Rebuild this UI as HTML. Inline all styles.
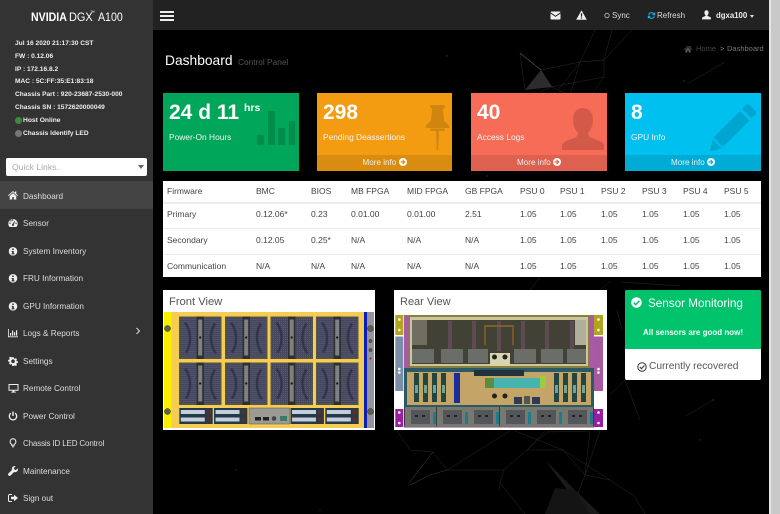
<!DOCTYPE html>
<html lang="en"><head><meta charset="utf-8"><title>Dashboard</title>
<style>
html,body{margin:0;padding:0;width:780px;height:514px;overflow:hidden;background:#000}
body{position:relative;font-family:"Liberation Sans",sans-serif}
.a{position:absolute;white-space:nowrap;line-height:1}
.abs{position:absolute}
#side{position:absolute;left:0;top:0;width:153px;height:514px;background:#333}
.info{position:absolute;left:15px;font-size:6.6px;font-weight:bold;color:#eee;white-space:nowrap;line-height:8px}
.nav{position:absolute;left:23px;font-size:8.2px;color:#ddd;white-space:nowrap;line-height:11px}
.ic{position:absolute;left:8px;width:10px;height:10px;fill:#eee}
.card{position:absolute;top:93px;height:78px;color:#fff}
.card .n{position:absolute;left:6px;top:9px;font-size:21px;font-weight:bold;line-height:22px;white-space:nowrap}
.card .l{position:absolute;left:6px;top:39px;font-size:8.4px;line-height:11px;white-space:nowrap;color:#f4f4f4}
.card .f{position:absolute;left:0;right:0;bottom:0;height:16px;background:rgba(0,0,0,.1);text-align:center;font-size:8.1px;line-height:16px;color:#eee}
.card svg.big{position:absolute}
.t{position:absolute;font-size:8.5px;line-height:10px;color:#444;white-space:nowrap}
.hr{position:absolute;left:163px;width:598px;height:1px;background:#ececec}
</style></head><body>

<svg class="abs" style="left:153px;top:30px" width="616" height="484" viewBox="153 30 616 484">
 <g fill="none" stroke="#2a2a2a" stroke-width=".5">
  <path d="M541 70 552 87 558 90 580 62 604 60 632 30M541 70 580 62 604 60M552 87 604 77 604 60M580 62 570 95 588 100 604 77M520 53 525 90M595 30 580 62M552 87 540 92M558 90 570 95M612 30 604 60"/>
  <path d="M687 84 725 62"/>
  <path d="M397 431 410 450 433 452 447 470 510 431M447 470 504 470 500 483 499 490M504 470 527 450 545 431M527 450 547 432 590 431 585 475 563 450 527 450M585 475 610 480 635 497 645 514M563 450 610 480M500 483 525 514M585 475 570 514M515 431 563 450M600 431 585 475"/>
  <path d="M686 416 713 400M625 380 640 420M622 282 680 286M610 395 625 380"/>
  <path d="M610 281 590 300M540 278 530 290M617 310 622 330"/>
 </g>
 <g stroke="#505050" stroke-width=".8" fill="none"><path d="M520 53 541 70"/></g>
 <g stroke="#3a3a3a" stroke-width=".6" fill="none"><path d="M447 470 430 475 410 485M409 483 433 452"/></g>
 <path d="M541 70 552 87 525 90Z" fill="#2c2c2c"/>
 <path d="M545 460 575 490 600 514 585 514 560 480Z" fill="#1a1a1a"/>
 <path d="M555 488 575 490 590 514 545 514Z" fill="#141414"/>
 <g fill="#3a3a3a"><circle cx="447" cy="56" r=".7"/><circle cx="372" cy="94" r=".6"/><circle cx="684" cy="81" r=".7"/><circle cx="700" cy="440" r=".7"/><circle cx="713" cy="400" r=".7"/><circle cx="487" cy="176" r=".7"/><circle cx="236" cy="470" r=".6"/><circle cx="320" cy="510" r=".6"/></g>
</svg>

<div class="abs" style="left:769px;top:0;width:11px;height:514px;background:#c9c9c9;border-left:2px solid #e4e4e4;box-sizing:border-box"></div>

<div id="side">
 <div class="a" style="left:31px;top:13px;font-size:11.500px;font-weight:bold;color:#fff;transform:scaleX(.92);transform-origin:left">NVIDIA</div>
 <div class="a" style="left:69px;top:13px;font-size:11.500px;color:#fff;transform:scaleX(.95);transform-origin:left">DGX</div>
 <div class="a" style="left:90px;top:11px;font-size:5px;color:#fff">™</div>
 <div class="a" style="left:98px;top:13px;font-size:11.500px;color:#fff;transform:scaleX(.92);transform-origin:left">A100</div>
 <div class="info" style="top:40px">Jul 16 2020 21:17:30 CST</div>
 <div class="info" style="top:53px">FW : 0.12.06</div>
 <div class="info" style="top:66px">IP : 172.16.8.2</div>
 <div class="info" style="top:78px">MAC : 5C:FF:35:E1:83:18</div>
 <div class="info" style="top:91px">Chassis Part : 920-23687-2530-000</div>
 <div class="info" style="top:104px">Chassis SN : 1572620000049</div>
 <div class="abs" style="left:15px;top:117px;width:7px;height:7px;border-radius:50%;background:#3d8b3d"></div>
 <div class="info" style="left:23px;top:117px;font-size:6.7px">Host Online</div>
 <div class="abs" style="left:15px;top:130px;width:7px;height:7px;border-radius:50%;background:#777"></div>
 <div class="info" style="left:23px;top:130px;font-size:6.6px">Chassis Identify LED</div>

 <div class="abs" style="left:6px;top:158px;width:141px;height:18px;background:#fff;border-radius:2px"></div>
 <div class="a" style="left:12px;top:163px;font-size:8.6px;color:#aaa">Quick Links..</div>
 <div class="abs" style="left:138px;top:165px;border-left:3px solid transparent;border-right:3px solid transparent;border-top:4px solid #666"></div>

 <div class="abs" style="left:0;top:181px;width:153px;height:28px;background:#444"></div>

 <svg class="ic" style="top:190px" viewBox="0 0 10 10"><path d="M5 1 0 5.4l.6.6L5 2.2 9.400 6l.6-.6L8.300 3.900V1.500H7v1.300ZM1.700 6v3.500h2.500V7h1.600v2.500h2.500V6L5 3.200Z"/></svg>
 <div class="nav" style="top:191px">Dashboard</div>

 <svg class="ic" style="top:218px" viewBox="0 0 10 10"><path fill-rule="evenodd" d="M5 1a4.700 4.700 0 0 0-4.700 4.700c0 1.300.5 2.500 1.300 3.300h6.800a4.700 4.700 0 0 0 1.300-3.300A4.700 4.700 0 0 0 5 1ZM2 6a.7.7 0 1 1 0-1.400A.7.7 0 0 1 2 6Zm1-2.400a.7.7 0 1 1 0-1.400.7.7 0 0 1 0 1.400Zm2-1a.7.7 0 1 1 0-1.200.7.7 0 0 1 0 1.200ZM5 8a1.100 1.100 0 0 1-.4-2.100L6.600 3l.5.300L5.800 6.200A1.100 1.100 0 0 1 5 8Zm3-2a.7.7 0 1 1 0-1.400A.7.7 0 0 1 8 6Z"/></svg>
 <div class="nav" style="top:218px">Sensor</div>

 <svg class="ic" style="top:246px" viewBox="0 0 10 10"><path fill-rule="evenodd" d="M5 1a4.300 4.300 0 1 0 0 8.600A4.300 4.300 0 0 0 5 1Zm-.8 1.500h1.600V4H4.200ZM3.600 5h2.200v2.400h.7v1h-3v-1h.7V6h-.6Z"/></svg>
 <div class="nav" style="top:246px">System Inventory</div>
 <svg class="ic" style="top:273px" viewBox="0 0 10 10"><path fill-rule="evenodd" d="M5 1a4.300 4.300 0 1 0 0 8.600A4.300 4.300 0 0 0 5 1Zm-.8 1.500h1.600V4H4.200ZM3.600 5h2.200v2.400h.7v1h-3v-1h.7V6h-.6Z"/></svg>
 <div class="nav" style="top:273px">FRU Information</div>
 <svg class="ic" style="top:301px" viewBox="0 0 10 10"><path fill-rule="evenodd" d="M5 1a4.300 4.300 0 1 0 0 8.600A4.300 4.300 0 0 0 5 1Zm-.8 1.500h1.600V4H4.200ZM3.600 5h2.200v2.400h.7v1h-3v-1h.7V6h-.6Z"/></svg>
 <div class="nav" style="top:301px">GPU Information</div>

 <svg class="ic" style="top:328px" viewBox="0 0 10 10"><path d="M0 1h.8v7.400H10V9.200H0ZM2 5h1.200v2.600H2Zm2-2.500h1.200v5.100H4ZM6 4.200h1.200v3.400H6Zm2-2h1.200v5.400H8Z"/></svg>
 <div class="nav" style="top:328px">Logs &amp; Reports</div>
 <svg class="abs" style="left:135px;top:327px" width="6" height="8" viewBox="0 0 6 8"><path d="M1.500 1 4.500 4 1.500 7" fill="none" stroke="#ddd" stroke-width="1"/></svg>

 <svg class="ic" style="top:356px" viewBox="0 0 10 10"><path fill-rule="evenodd" d="M4.200.8h1.600l.2 1.200.9.400 1-.7 1.100 1.100-.7 1 .4.900 1.200.2v1.600l-1.200.2-.4.900.7 1-1.100 1.100-1-.7-.9.400-.2 1.200H4.200L4 8l-.9-.4-1 .7L1 7.200l.7-1-.4-.9L.100 5.100V3.500l1.200-.2.4-.9-.7-1L2.100.3l1 .7L4 .6ZM5 3a1.800 1.800 0 1 0 0 3.600A1.800 1.800 0 0 0 5 3Z" transform="translate(0 .4)"/></svg>
 <div class="nav" style="top:356px">Settings</div>

 <svg class="ic" style="top:383px;width:11px" viewBox="0 0 11 10"><path fill-rule="evenodd" d="M.5 1h10v6.800h-4v1h1.200v.8H3.300v-.8h1.200v-1h-4Zm1 1v4.800h8V2Z"/></svg>
 <div class="nav" style="top:383px">Remote Control</div>

 <svg class="ic" style="top:411px" viewBox="0 0 10 10"><path d="M4.300.5h1.400v4.500H4.300Z"/><path d="M2.900 2.200a3.700 3.700 0 1 0 4.200 0" fill="none" stroke="#eee" stroke-width="1.300"/></svg>
 <div class="nav" style="top:411px">Power Control</div>

 <svg class="ic" style="top:438px" viewBox="0 0 10 10"><path d="M5 .8a2.900 2.900 0 0 1 1.600 5.300l-.2 1H3.600l-.2-1A2.900 2.900 0 0 1 5 .8Z" fill="none" stroke="#eee" stroke-width="1"/><path d="M3.800 7.800h2.400v.7H3.800Zm.5 1h1.400v.7H4.300Z"/></svg>
 <div class="nav" style="top:438px;letter-spacing:-.15px;font-size:8px">Chassis ID LED Control</div>

 <svg class="ic" style="top:466px" viewBox="0 0 10 10"><path d="M9.800 2.300 8 4l-1.700-.4L5.900 2 7.700.2a2.900 2.900 0 0 0-3.700 3.700L.4 7.500a1.300 1.300 0 0 0 0 1.800l.3.300a1.300 1.300 0 0 0 1.800 0L6.100 6a2.900 2.900 0 0 0 3.700-3.700Z"/></svg>
 <div class="nav" style="top:466px">Maintenance</div>

 <svg class="ic" style="top:493px" viewBox="0 0 10 10"><path d="M4 1.500H1.800A1.300 1.300 0 0 0 .5 2.800v4.400a1.300 1.300 0 0 0 1.300 1.300H4" fill="none" stroke="#eee" stroke-width="1"/><path d="M3 3.800h3V1.800L10 5 6 8.200V6.200H3Z"/></svg>
 <div class="nav" style="top:493px">Sign out</div>
</div>

<div class="abs" style="left:153px;top:0;width:616px;height:30px;background:#222"></div>
<div class="abs" style="left:160px;top:11px;width:14px;height:2px;background:#eee"></div>
<div class="abs" style="left:160px;top:15px;width:14px;height:2px;background:#eee"></div>
<div class="abs" style="left:160px;top:19px;width:14px;height:2px;background:#eee"></div>

<svg class="abs" style="left:550px;top:11px" width="11" height="9" viewBox="0 0 11 9"><path d="M.5 1.200A1 1 0 0 1 1.500.5h8a1 1 0 0 1 1 .7L5.500 4.700ZM.5 2.500l5 3.400 5-3.400V7.500a1 1 0 0 1-1 1h-8a1 1 0 0 1-1-1Z" fill="#eee"/></svg>
<svg class="abs" style="left:576px;top:10px" width="11" height="10" viewBox="0 0 11 10"><path fill-rule="evenodd" d="M5.500.3 10.800 9.700H.2ZM4.800 3.300l.2 3.500h1l.2-3.500ZM4.900 7.400v1.200h1.200V7.400Z" fill="#eee"/></svg>
<svg class="abs" style="left:604px;top:12px" width="6" height="7" viewBox="0 0 6 7"><circle cx="3" cy="3.500" r="2.200" fill="none" stroke="#bbb" stroke-width=".8"/></svg>
<div class="a" style="left:612px;top:11.500px;font-size:8px;color:#ddd">Sync</div>
<svg class="abs" style="left:647px;top:11px" width="9" height="9" viewBox="0 0 9 9"><path d="M1 3.800A3.600 3.600 0 0 1 7 2.200L8.200 1v3.200H5L6.200 3A2.400 2.400 0 0 0 2.200 3.800ZM8 5.200A3.600 3.600 0 0 1 2 6.800L.8 8V4.800H4L2.800 6a2.400 2.400 0 0 0 4-.8Z" fill="#16b0e8"/></svg>
<div class="a" style="left:657px;top:11.500px;font-size:8px;color:#ddd">Refresh</div>
<svg class="abs" style="left:702px;top:10px" width="9" height="10" viewBox="0 0 9 10"><path d="M4.500.3c1.300 0 2.100 1 2.100 2.400 0 1-.5 2-1.100 2.400v.8l3 1.300c.3.200.4.500.4 1V9.400H.1V8.200c0-.4.100-.8.500-1l2.900-1.300v-.8C2.900 4.700 2.400 3.700 2.400 2.700 2.400 1.300 3.200.3 4.500.3Z" fill="#eee"/></svg>
<div class="a" style="left:716px;top:11.500px;font-size:7.800px;font-weight:bold;color:#eee">dgxa100</div>
<div class="abs" style="left:750px;top:15px;border-left:2.500px solid transparent;border-right:2.500px solid transparent;border-top:3px solid #ddd"></div>

<div class="a" style="left:165px;top:54px;font-size:13.800px;color:#fff">Dashboard</div>
<div class="a" style="left:238px;top:58px;font-size:8.300px;color:#555">Control Panel</div>
<svg class="abs" style="left:684px;top:45px" width="8" height="8" viewBox="0 0 10 10"><path d="M5 1 0 5.400l.6.6L5 2.200 9.400 6l.6-.6L8.300 3.900V1.500H7v1.300ZM1.700 6v3.500h2.500V7h1.600v2.500h2.500V6L5 3.200Z" fill="#555"/></svg>
<div class="a" style="left:696px;top:45px;font-size:7.500px;color:#444">Home</div>
<div class="a" style="left:720px;top:45px;font-size:7.500px;color:#888">&gt;</div>
<div class="a" style="left:727px;top:45px;font-size:7.500px;color:#777">Dashboard</div>

<div class="card" style="left:163px;width:136px;background:#00a65a">
 <div class="n">24 d 11</div>
 <div class="a" style="left:81px;top:10px;font-size:10.500px;font-weight:bold">hrs</div>
 <div class="l">Power-On Hours</div>
 <svg class="big" style="left:94px;top:17px" width="40" height="36" viewBox="0 0 40 36" fill="#008d4c"><path d="M0 25h7v10H0ZM11 1h7v34h-7ZM21 18h7v17h-7ZM32 11h6v24h-6Z"/></svg>
</div>
<div class="card" style="left:317px;width:135px;background:#f39c12">
 <div class="n">298</div>
 <div class="l">Pending Deassertions</div>
 <svg class="big" style="left:108px;top:11px" width="25" height="48" viewBox="0 0 25 50" fill="#d08510"><path d="M5 1h15v3l-2 1 1.500 13c3 1.500 5 4 5.500 7H0c.5-3 2.500-5.500 5.500-7L7 5 5 4Z"/><path d="M5 25.500h15v2.500H14l-.7 20h-1.600L11 28H5Z"/></svg>
 <div class="f">More info <svg width="8" height="8" viewBox="0 0 8 8" style="vertical-align:-1px"><path fill-rule="evenodd" d="M4 0a4 4 0 1 1 0 8 4 4 0 0 1 0-8ZM4 1.500 3.200 2.300 4.400 3.400H1.500v1.200h2.900L3.200 5.700 4 6.500 6.500 4Z" fill="#fff"/></svg></div>
</div>
<div class="card" style="left:471px;width:136px;background:#f76c57">
 <div class="n">40</div>
 <div class="l">Access Logs</div>
 <svg class="big" style="left:91px;top:15px" width="42" height="42" viewBox="0 0 42 42" fill="#d35a48"><path d="M21 0c6 0 10 4.500 10 12 0 5-2 10-5 13 .2 2 .8 3.500 2.500 4.500 5 2 12 3.500 13.500 7.500v5H0v-5c1.500-4 8.500-5.500 13.500-7.500 1.700-1 2.300-2.500 2.500-4.500-3-3-5-8-5-13C11 4.500 15 0 21 0Z"/></svg>
 <div class="f">More info <svg width="8" height="8" viewBox="0 0 8 8" style="vertical-align:-1px"><path fill-rule="evenodd" d="M4 0a4 4 0 1 1 0 8 4 4 0 0 1 0-8ZM4 1.500 3.200 2.300 4.400 3.400H1.500v1.200h2.900L3.200 5.700 4 6.500 6.500 4Z" fill="#fff"/></svg></div>
</div>
<div class="card" style="left:625px;width:136px;background:#00c0ef">
 <div class="n">8</div>
 <div class="l">GPU Info</div>
 <svg class="big" style="left:85px;top:11px" width="47" height="48" viewBox="0 0 47 48" fill="#00a5d0"><path d="M36 1c1-1 2.500-1 3.500 0l6 6c1 1 1 2.500 0 3.500l-4 4-9.500-9.500ZM30 7l9.500 9.500L13 43 3.500 33.500ZM2.500 35.500l9 9L0 47.500Z"/></svg>
 <div class="f">More info <svg width="8" height="8" viewBox="0 0 8 8" style="vertical-align:-1px"><path fill-rule="evenodd" d="M4 0a4 4 0 1 1 0 8 4 4 0 0 1 0-8ZM4 1.500 3.200 2.300 4.400 3.400H1.500v1.200h2.900L3.200 5.700 4 6.500 6.500 4Z" fill="#fff"/></svg></div>
</div>

<div class="abs" style="left:163px;top:181px;width:598px;height:96px;background:#fff"></div>
<div class="hr" style="top:202px;height:2px"></div><div class="hr" style="top:228px"></div><div class="hr" style="top:254px"></div>
<div class="t" style="left:167px;top:186px">Firmware</div><div class="t" style="left:256px;top:186px">BMC</div><div class="t" style="left:311px;top:186px">BIOS</div><div class="t" style="left:351px;top:186px">MB FPGA</div><div class="t" style="left:407px;top:186px">MID FPGA</div><div class="t" style="left:465px;top:186px">GB FPGA</div><div class="t" style="left:520px;top:186px">PSU 0</div><div class="t" style="left:560px;top:186px">PSU 1</div><div class="t" style="left:601px;top:186px">PSU 2</div><div class="t" style="left:642px;top:186px">PSU 3</div><div class="t" style="left:683px;top:186px">PSU 4</div><div class="t" style="left:724px;top:186px">PSU 5</div>
<div class="t" style="left:167px;top:209px">Primary</div><div class="t" style="left:256px;top:209px">0.12.06*</div><div class="t" style="left:311px;top:209px">0.23</div><div class="t" style="left:351px;top:209px">0.01.00</div><div class="t" style="left:407px;top:209px">0.01.00</div><div class="t" style="left:465px;top:209px">2.51</div><div class="t" style="left:520px;top:209px">1.05</div><div class="t" style="left:560px;top:209px">1.05</div><div class="t" style="left:601px;top:209px">1.05</div><div class="t" style="left:642px;top:209px">1.05</div><div class="t" style="left:683px;top:209px">1.05</div><div class="t" style="left:724px;top:209px">1.05</div>
<div class="t" style="left:167px;top:235px">Secondary</div><div class="t" style="left:256px;top:235px">0.12.05</div><div class="t" style="left:311px;top:235px">0.25*</div><div class="t" style="left:351px;top:235px">N/A</div><div class="t" style="left:407px;top:235px">N/A</div><div class="t" style="left:465px;top:235px">N/A</div><div class="t" style="left:520px;top:235px">1.05</div><div class="t" style="left:560px;top:235px">1.05</div><div class="t" style="left:601px;top:235px">1.05</div><div class="t" style="left:642px;top:235px">1.05</div><div class="t" style="left:683px;top:235px">1.05</div><div class="t" style="left:724px;top:235px">1.05</div>
<div class="t" style="left:167px;top:261px">Communication</div><div class="t" style="left:256px;top:261px">N/A</div><div class="t" style="left:311px;top:261px">N/A</div><div class="t" style="left:351px;top:261px">N/A</div><div class="t" style="left:407px;top:261px">N/A</div><div class="t" style="left:465px;top:261px">N/A</div><div class="t" style="left:520px;top:261px">1.05</div><div class="t" style="left:560px;top:261px">1.05</div><div class="t" style="left:601px;top:261px">1.05</div><div class="t" style="left:642px;top:261px">1.05</div><div class="t" style="left:683px;top:261px">1.05</div><div class="t" style="left:724px;top:261px">1.05</div>

<div class="abs" style="left:163px;top:290px;width:212px;height:140px;background:#fff"></div>
<div class="a" style="left:169px;top:297px;font-size:11.200px;color:#555">Front View</div>
<svg class="abs" style="left:163px;top:312px" width="212" height="117" viewBox="163 312 212 117">
 <defs>
  <pattern id="mesh" width="2" height="2" patternUnits="userSpaceOnUse"><rect width="2" height="2" fill="#45475f"/><circle cx="1" cy="1" r=".55" fill="#5f6178"/></pattern>
  <g id="fan"><rect width="42.500" height="42.500" fill="#55534a"/><rect x="1.500" y="1.500" width="39.500" height="39.500" fill="url(#mesh)"/><path d="M7 36C13 27 12 14 6 6M36 7C30 16 31 29 37 37" stroke="#33354a" stroke-width="2.500" fill="none"/><rect x="17.500" y="0" width="7.500" height="42.500" fill="#2f2f2f"/><rect x="19.200" y="3" width="4" height="36" fill="#7e8084"/><rect x="20.200" y="20" width="2" height="2" fill="#111"/></g>
  <g id="drv"><rect width="33.400" height="16" fill="#1f3d44"/><rect x="1.500" y="2" width="24" height="4" fill="#c9c9e0"/><rect x="1.500" y="9.500" width="24" height="4" fill="#c9c9e0"/><rect x="27" y="2" width="5" height="4.500" fill="#5c2a30"/><rect x="27" y="9.500" width="5" height="4.500" fill="#5c2a30"/></g>
 </defs>
 <rect x="164" y="312" width="210" height="116" fill="#f5cd55"/>
 <rect x="164" y="312" width="7.500" height="116" fill="#f8ef00"/>
 <rect x="364" y="312" width="3" height="116" fill="#0b1fb5"/>
 <rect x="367" y="312" width="7" height="116" fill="#94959a"/>
 <g fill="#5e6048" stroke="#333" stroke-width=".5"><circle cx="167.500" cy="328.500" r="3"/><circle cx="167.500" cy="411.500" r="3"/><circle cx="370.500" cy="328.500" r="3"/><circle cx="370.500" cy="411.500" r="3"/><circle cx="370.500" cy="341" r="1.600"/><circle cx="370.500" cy="350" r="1.600"/></g>
 <circle cx="370.500" cy="358.500" r="1" fill="#a22"/>
 <use href="#fan" x="179" y="316.500"/><use href="#fan" x="225" y="316.500"/><use href="#fan" x="270.500" y="316.500"/><use href="#fan" x="316" y="316.500"/>
 <use href="#fan" x="179" y="362.500"/><use href="#fan" x="225" y="362.500"/><use href="#fan" x="270.500" y="362.500"/><use href="#fan" x="316" y="362.500"/>
 <use href="#drv" x="179.300" y="408"/><use href="#drv" x="214" y="408"/><use href="#drv" x="290.500" y="408"/><use href="#drv" x="325.300" y="408"/>
 <rect x="249" y="408" width="40.500" height="16" fill="#9b9b94" stroke="#555" stroke-width=".5"/>
 <rect x="255" y="417" width="6" height="3.500" fill="#222"/><rect x="263" y="417" width="6" height="3.500" fill="#222"/><circle cx="274" cy="418.500" r="2.300" fill="#444"/><rect x="280" y="416" width="7" height="5" fill="#3d7a6a"/>
</svg>

<div class="abs" style="left:394px;top:290px;width:213px;height:140px;background:#fff"></div>
<div class="a" style="left:400px;top:297px;font-size:11px;color:#555">Rear View</div>
<svg class="abs" style="left:394px;top:314px" width="212" height="115" viewBox="394 314 212 115">
 <defs>
  <pattern id="perf" width="2" height="2" patternUnits="userSpaceOnUse"><rect width="2" height="2" fill="#37372e"/><circle cx="1" cy="1" r=".5" fill="#6f6e58"/></pattern>
  <g id="outlet"><rect width="31" height="20" fill="#77786f"/><rect x="6" y="3" width="19" height="14" fill="#55565a"/><rect x="10" y="8" width="3" height="2" fill="#222"/><rect x="17" y="8" width="3" height="2" fill="#222"/><rect x="28" y="5" width="3" height="12" fill="#1d7d8a"/></g>
  <g id="card"><rect width="5" height="29" fill="#24443f"/><rect x="1" y="12" width="3" height="8" fill="#6ca69a"/></g>
 </defs>
 <rect x="395.300" y="315" width="8" height="20" fill="#b3a51b"/>
 <rect x="395.300" y="336.500" width="8" height="54.500" fill="#7b8ea8"/>
 <rect x="395.300" y="409" width="8" height="18" fill="#9a1ea0"/>
 <rect x="594" y="315" width="9" height="20" fill="#b3a51b"/>
 <rect x="594" y="336.500" width="9" height="54.500" fill="#a75aa0"/>
 <rect x="594" y="409" width="9" height="18" fill="#9a1ea0"/>
 <g fill="#fff"><circle cx="399.300" cy="319.500" r="1.300"/><circle cx="399.300" cy="330" r="1.300"/><circle cx="399.300" cy="369" r="1.300"/><circle cx="399.300" cy="372.500" r="1.300"/><circle cx="399.300" cy="412.500" r="1.300"/><circle cx="399.300" cy="423" r="1.300"/><circle cx="598.500" cy="319.500" r="1.300"/><circle cx="598.500" cy="330" r="1.300"/><circle cx="598.500" cy="369" r="1.300"/><circle cx="598.500" cy="372.500" r="1.300"/><circle cx="598.500" cy="412.500" r="1.300"/><circle cx="598.500" cy="423" r="1.300"/></g>
 <rect x="404" y="315" width="190" height="53" fill="#8a7f3a"/>
 <rect x="404" y="316" width="4.500" height="52" fill="#a85aa8"/><rect x="589.500" y="316" width="4.500" height="52" fill="#a85aa8"/>
 <rect x="410" y="317" width="178" height="49" fill="#c8c7a0"/>
 <rect x="412" y="320" width="174" height="44" fill="url(#perf)"/>
 <rect x="412" y="320" width="15" height="25" fill="#6f6e60"/>
 <rect x="575" y="320" width="11" height="25" fill="#b0b09a"/>
 <g fill="#5e4a52"><rect x="448" y="321" width="4" height="30"/><rect x="472" y="321" width="4" height="30"/><rect x="497" y="321" width="4" height="30"/><rect x="521" y="321" width="4" height="30"/><rect x="545" y="321" width="4" height="30"/><rect x="570" y="321" width="4" height="30"/></g>
 <g fill="#6b6e68"><rect x="412" y="349" width="22" height="14"/><rect x="441" y="349" width="22" height="14"/><rect x="468" y="349" width="20" height="14"/><rect x="514" y="349" width="22" height="14"/><rect x="541" y="349" width="22" height="14"/><rect x="567" y="349" width="19" height="14"/></g>
 <path d="M485 345V326H513V345" fill="none" stroke="#9a6b20" stroke-width="1.300"/>
 <rect x="490" y="353" width="20" height="13" fill="#d8d4b0"/><circle cx="494.500" cy="357" r="2.500" fill="#222"/><circle cx="505" cy="357" r="2.500" fill="#222"/>
 <rect x="404" y="368" width="190" height="39" fill="#2b5a66"/>
 <rect x="407" y="372" width="184" height="33" fill="#c4a467"/>
 <rect x="474" y="370" width="50" height="6" fill="#22323a"/>
 <use href="#card" x="414" y="373"/><use href="#card" x="423" y="373"/><use href="#card" x="432" y="373"/><use href="#card" x="441" y="373"/>
 <use href="#card" x="554" y="373"/><use href="#card" x="563" y="373"/><use href="#card" x="572" y="373"/><use href="#card" x="581" y="373"/>
 <rect x="454" y="373" width="6" height="30" fill="#1b2d9c"/>
 <rect x="494" y="378" width="48" height="10" fill="#46b5b0"/>
 <rect x="485" y="378" width="9" height="10" fill="#5e8b3d"/><rect x="540" y="376" width="6" height="12" fill="#9ccc40"/>
 <circle cx="494.500" cy="396" r="2.500" fill="#222"/><circle cx="505" cy="396" r="2.500" fill="#222"/>
 <rect x="514" y="397" width="8" height="7" fill="#2f3a56"/><rect x="524" y="396" width="6" height="8" fill="#555"/><rect x="532" y="397" width="8" height="7" fill="#2f3a56"/>
 <rect x="404" y="407" width="190" height="20.500" fill="#3b3b3b"/>
 <rect x="404" y="425.500" width="190" height="2" fill="#7a3a80"/>
 <use href="#outlet" x="405" y="407"/><use href="#outlet" x="437" y="407"/><use href="#outlet" x="468" y="407"/><use href="#outlet" x="500" y="407"/><use href="#outlet" x="531" y="407"/><use href="#outlet" x="562" y="407"/>
</svg>

<div class="abs" style="left:625px;top:290px;width:136px;height:90px;background:#fff;border-radius:2px"></div>
<div class="abs" style="left:625px;top:290px;width:136px;height:59px;background:#00c36c;border-radius:2px 2px 0 0"></div>
<svg class="abs" style="left:631px;top:297px" width="11" height="11" viewBox="0 0 11 11"><circle cx="5.500" cy="5.500" r="5.300" fill="#fff"/><path d="M2.800 5.700 4.800 7.700 8.300 3.900" fill="none" stroke="#00c36c" stroke-width="1.500"/></svg>
<div class="a" style="left:648px;top:298px;font-size:11.700px;color:#fff">Sensor Monitoring</div>
<div class="a" style="left:643px;top:329px;font-size:8px;font-weight:bold;color:#f2fff8">All sensors are good now!</div>
<svg class="abs" style="left:637px;top:362px" width="10" height="10" viewBox="0 0 10 10"><circle cx="5" cy="5" r="4.200" fill="none" stroke="#333" stroke-width="1"/><path d="M2.800 5 4.500 6.700 7.400 3.500" fill="none" stroke="#333" stroke-width="1.100"/></svg>
<div class="a" style="left:649px;top:362px;font-size:10.200px;color:#555">Currently recovered</div>

</body></html>
